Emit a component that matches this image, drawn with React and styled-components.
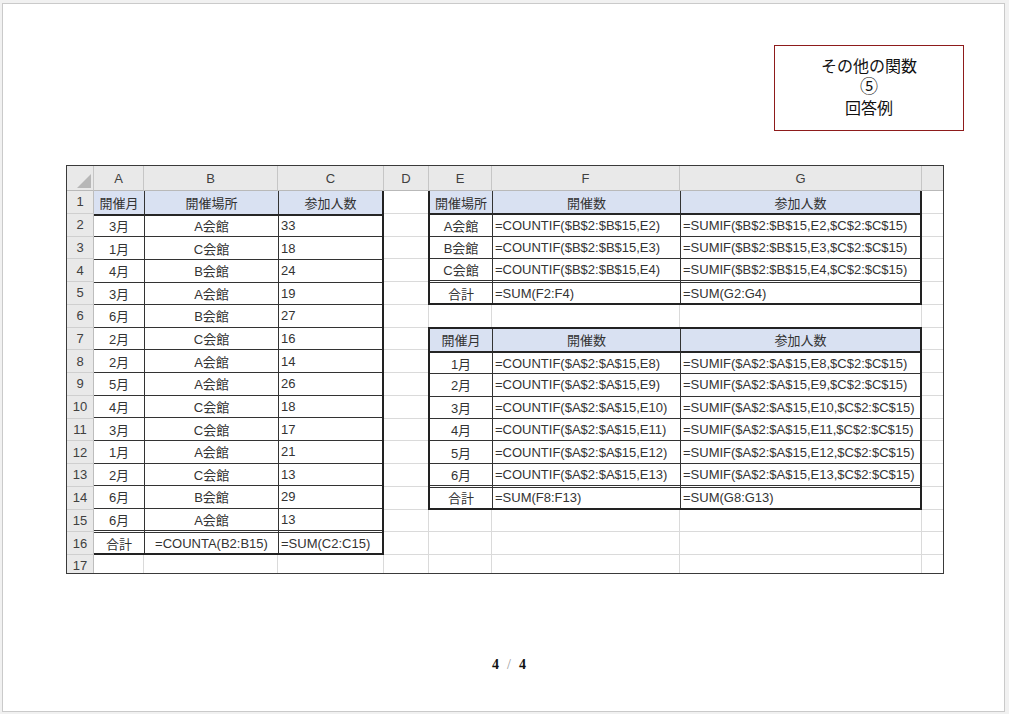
import React from "react";
import styled, { createGlobalStyle, css } from "styled-components";

const Global = createGlobalStyle`
  html, body { margin: 0; padding: 0; }
  body {
    background: #f1f1f1;
    font-family: "Liberation Sans", "Noto Sans CJK JP", sans-serif;
  }
`;

const COLS = [27, 50, 134, 106, 45, 63, 188, 242, 21];
const LETTERS = ["A", "B", "C", "D", "E", "F", "G", ""];

const Page = styled.div`
  box-sizing: border-box;
  margin: 3px 0 0 2px;
  width: 1003px;
  height: 709px;
  background: #fff;
  border: 1px solid #cacaca;
  display: flex;
  flex-direction: column;
`;

const TitleBox = styled.div`
  box-sizing: border-box;
  align-self: flex-end;
  margin: 41px 40px 0 0;
  width: 190px;
  height: 86px;
  border: 1px solid #8e1b1b;
  display: flex;
  flex-direction: column;
  align-items: center;
  justify-content: center;
  padding-bottom: 2px;
  font-family: "Liberation Sans", "Noto Sans CJK JP", sans-serif;
  font-size: 16px;
  color: #111;
`;

const TitleLine = styled.div`
  height: 21px;
  line-height: 21px;
  font-size: ${(p) => (p.$big ? "18px" : "16px")};
`;

const Sheet = styled.div`
  box-sizing: border-box;
  align-self: flex-start;
  margin: 34px 0 0 63px;
  border: 1px solid #3a3a3a;
  display: grid;
  grid-template-columns: ${COLS.map((c) => c + "px").join(" ")};
  grid-template-rows: 25px repeat(16, 22.75px) 18px;
  background: #fff;
  overflow: hidden;
`;

const HeadCell = styled.div`
  box-sizing: border-box;
  background: #e9e9e9;
  border-right: ${(p) => (p.$last ? "none" : "1px solid #c6c6c6")};
  border-bottom: 1px solid #b9b9b9;
  display: flex;
  align-items: center;
  justify-content: center;
  font-size: 13px;
  color: #404040;
`;

const Corner = styled(HeadCell)`
  align-items: flex-end;
  justify-content: flex-end;
  padding: 0 2px 2px 0;
`;

const RowNum = styled.div`
  box-sizing: border-box;
  background: #e9e9e9;
  border-right: 1px solid #bdbdbd;
  border-bottom: ${(p) => (p.$last ? "none" : "1px solid #cfcfcf")};
  display: flex;
  align-items: ${(p) => (p.$last ? "flex-end" : "center")};
  justify-content: center;
  font-size: 13px;
  line-height: 15px;
  color: #404040;
  overflow: hidden;
`;

const GridCell = styled.div`
  box-sizing: border-box;
  border-right: ${(p) => (p.$lastCol ? "none" : "1px solid #dadada")};
  border-bottom: ${(p) => (p.$lastRow ? "none" : "1px solid #dadada")};
`;

const Table = styled.div`
  box-sizing: border-box;
  grid-column: ${(p) => p.$col};
  grid-row: ${(p) => p.$row};
  z-index: 1;
  display: grid;
  grid-template-columns: ${(p) => p.$cols};
  grid-auto-rows: 1fr;
  background: #fff;
  border: 2px solid #222;
  margin: -1px 0 0 -1px;
  ${(p) =>
    p.$open &&
    css`
      border-top: none;
      border-left: none;
      margin: 0;
    `}
  ${(p) =>
    p.$noTop &&
    css`
      border-top: none;
      margin-top: 0;
    `}
`;

const TOPS = {
  head: "none",
  first: "2px solid #262626",
  data: "1px solid #333",
  total: "3px double #333",
};

const Cell = styled.div`
  box-sizing: border-box;
  min-width: 0;
  display: flex;
  align-items: center;
  justify-content: ${(p) => (p.$left ? "flex-start" : "center")};
  padding: 0 2px;
  font-size: 13px;
  color: #333;
  white-space: nowrap;
  overflow: hidden;
  background: ${(p) => (p.$kind === "head" ? "#d9e1f2" : "#fff")};
  border-left: ${(p) => (p.$first ? "none" : "1px solid #333")};
  border-top: ${(p) => TOPS[p.$kind]};
`;

const PageNum = styled.div`
  align-self: center;
  margin: 83px 0 0 11px;
  font-family: "Liberation Serif", serif;
  font-size: 14px;
  line-height: 16px;
  color: #111;
  display: flex;
  gap: 8px;
`;

const Bold = styled.span`
  font-weight: bold;
`;

const Slash = styled.span`
  color: #999;
  font-weight: normal;
`;

function DataTable({ col, row, cols, open, noTop, header, rows, total, aligns }) {
  const all = [
    { kind: "head", cells: header },
    ...rows.map((r, i) => ({ kind: i === 0 ? "first" : "data", cells: r })),
    { kind: "total", cells: total },
  ];
  return (
    <Table $col={col} $row={row} $cols={cols} $open={open} $noTop={noTop}>
      {all.map((r, ri) =>
        r.cells.map((t, ci) => (
          <Cell
            key={ri + "-" + ci}
            $kind={r.kind}
            $first={ci === 0}
            $left={r.kind !== "head" && aligns[ci] === "left" && !(r.kind === "total" && ci === 0)}
          >
            {t}
          </Cell>
        ))
      )}
    </Table>
  );
}

const leftRows = [
  ["3月", "A会館", "33"],
  ["1月", "C会館", "18"],
  ["4月", "B会館", "24"],
  ["3月", "A会館", "19"],
  ["6月", "B会館", "27"],
  ["2月", "C会館", "16"],
  ["2月", "A会館", "14"],
  ["5月", "A会館", "26"],
  ["4月", "C会館", "18"],
  ["3月", "C会館", "17"],
  ["1月", "A会館", "21"],
  ["2月", "C会館", "13"],
  ["6月", "B会館", "29"],
  ["6月", "A会館", "13"],
];

const hallRows = ["A", "B", "C"].map((h, i) => [
  `${h}会館`,
  `=COUNTIF($B$2:$B$15,E${i + 2})`,
  `=SUMIF($B$2:$B$15,E${i + 2},$C$2:$C$15)`,
]);

const monthRows = [1, 2, 3, 4, 5, 6].map((m, i) => [
  `${m}月`,
  `=COUNTIF($A$2:$A$15,E${i + 8})`,
  `=SUMIF($A$2:$A$15,E${i + 8},$C$2:$C$15)`,
]);

function covered(r, c) {
  if (c >= 1 && c <= 3 && r >= 1 && r <= 16) return true;
  if (c >= 5 && c <= 7 && r >= 1 && r <= 5) return true;
  if (c >= 5 && c <= 7 && r >= 7 && r <= 14) return true;
  return false;
}

export default function App() {
  const bg = [];
  bg.push(
    <Corner key="corner">
      <svg width="14" height="14" viewBox="0 0 14 14">
        <polygon points="14,0 14,14 0,14" fill="#b7b7b7" />
      </svg>
    </Corner>
  );
  LETTERS.forEach((l, i) =>
    bg.push(
      <HeadCell key={"h" + i} $last={i === LETTERS.length - 1}>
        {l}
      </HeadCell>
    )
  );
  for (let r = 1; r <= 17; r++) {
    bg.push(
      <RowNum key={"r" + r} $last={r === 17}>
        {r}
      </RowNum>
    );
    for (let c = 1; c <= 8; c++) {
      if (covered(r, c)) continue;
      bg.push(<GridCell key={r + "-" + c} $lastCol={c === 8} $lastRow={r === 17} />);
    }
  }

  return (
    <>
      <Global />
      <Page>
        <TitleBox>
          <TitleLine>その他の関数</TitleLine>
          <TitleLine $big>⑤</TitleLine>
          <TitleLine>回答例</TitleLine>
        </TitleBox>
        <Sheet>
          {bg}
          <DataTable
            col="2 / 5"
            row="2 / 18"
            cols="50px 134px 1fr"
            open
            header={["開催月", "開催場所", "参加人数"]}
            rows={leftRows}
            total={["合計", "=COUNTA(B2:B15)", "=SUM(C2:C15)"]}
            aligns={["center", "center", "left"]}
          />
          <DataTable
            col="6 / 9"
            row="2 / 7"
            cols="62px 188px 1fr"
            noTop
            header={["開催場所", "開催数", "参加人数"]}
            rows={hallRows}
            total={["合計", "=SUM(F2:F4)", "=SUM(G2:G4)"]}
            aligns={["center", "left", "left"]}
          />
          <DataTable
            col="6 / 9"
            row="8 / 16"
            cols="62px 188px 1fr"
            header={["開催月", "開催数", "参加人数"]}
            rows={monthRows}
            total={["合計", "=SUM(F8:F13)", "=SUM(G8:G13)"]}
            aligns={["center", "left", "left"]}
          />
        </Sheet>
        <PageNum>
          <Bold>4</Bold>
          <Slash>/</Slash>
          <Bold>4</Bold>
        </PageNum>
      </Page>
    </>
  );
}
